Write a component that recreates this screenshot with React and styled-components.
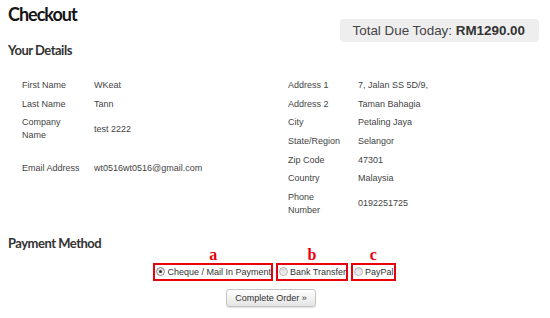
import React, { useState } from "react";
import styled, { createGlobalStyle } from "styled-components";

const GlobalStyle = createGlobalStyle`
  body {
    margin: 0;
    background: #fff;
    font-family: "Liberation Sans", Arial, sans-serif;
    color: #333;
  }
`;

const personal = [
  { label: "First Name", value: "WKeat" },
  { label: "Last Name", value: "Tann" },
  { label: "Company Name", value: "test 2222" },
  { spacer: true },
  { label: "Email Address", value: "wt0516wt0516@gmail.com" },
];

const address = [
  { label: "Address 1", value: "7, Jalan SS 5D/9," },
  { label: "Address 2", value: "Taman Bahagia" },
  { label: "City", value: "Petaling Jaya" },
  { label: "State/Region", value: "Selangor" },
  { label: "Zip Code", value: "47301" },
  { label: "Country", value: "Malaysia" },
  { label: "Phone Number", value: "0192251725" },
];

const methods = [
  { key: "a", label: "Cheque / Mail In Payment" },
  { key: "b", label: "Bank Transfer" },
  { key: "c", label: "PayPal" },
];

function DetailTable({ rows, labelWidth }) {
  return (
    <Table>
      {rows.map((row, i) =>
        row.spacer ? (
          <Spacer key={i} />
        ) : (
          <Row key={i} $labelWidth={labelWidth}>
            <Label>{row.label}</Label>
            <Value>{row.value}</Value>
          </Row>
        )
      )}
    </Table>
  );
}

export default function App() {
  const [method, setMethod] = useState("a");
  return (
    <Page>
      <GlobalStyle />
      <Header>
        <Title>Checkout</Title>
        <TotalDue>
          Total Due Today: <b>RM1290.00</b>
        </TotalDue>
      </Header>

      <SubTitle>Your Details</SubTitle>
      <Details>
        <DetailTable rows={personal} labelWidth={72} />
        <DetailTable rows={address} labelWidth={70} />
      </Details>

      <PaymentTitle>Payment Method</PaymentTitle>
      <Options>
        {methods.map((m) => (
          <Option key={m.key}>
            <Marker>{m.key}</Marker>
            <OptionBox onClick={() => setMethod(m.key)}>
              <Radio $checked={method === m.key} />
              {m.label}
            </OptionBox>
          </Option>
        ))}
      </Options>
      <Actions>
        <CompleteButton type="button">Complete Order &raquo;</CompleteButton>
      </Actions>
    </Page>
  );
}

const Page = styled.div`
  width: 550px;
  height: 318px;
  box-sizing: border-box;
  padding: 0 11px 0 8px;
  overflow: hidden;
`;

const Header = styled.div`
  display: flex;
  justify-content: space-between;
  align-items: flex-start;
  height: 42px;
`;

const Title = styled.h1`
  margin: 3px 0 0;
  font-family: Lato, "Open Sans", sans-serif;
  font-weight: 700;
  font-size: 18px;
  line-height: 22px;
  letter-spacing: -1px;
  color: #151515;
`;

const TotalDue = styled.div`
  margin-top: 19px;
  height: 23px;
  box-sizing: border-box;
  padding: 0 14px 0 13px;
  display: flex;
  align-items: center;
  background: #eeeeee;
  border-radius: 4px;
  font-size: 13.4px;
  color: #444;
  white-space: pre;

  b {
    color: #333;
  }
`;

const SubTitle = styled.h2`
  margin: 0;
  font-family: Lato, "Open Sans", sans-serif;
  font-weight: 700;
  font-size: 13px;
  line-height: 16px;
  letter-spacing: -0.5px;
  color: #333;
`;

const Details = styled.div`
  display: grid;
  grid-template-columns: 266px 1fr;
  padding-left: 14px;
  margin-top: 18px;
`;

const Table = styled.div`
  display: flex;
  flex-direction: column;
`;

const Row = styled.div`
  display: grid;
  grid-template-columns: ${(p) => p.$labelWidth}px 1fr;
  align-items: center;
  padding: 2.85px 0;
  font-size: 9px;
  line-height: 13px;
`;

const Spacer = styled.div`
  height: 14.5px;
`;

const Label = styled.div`
  padding-right: 12px;
  color: #444;
`;

const Value = styled.div`
  color: #444;
`;

const PaymentTitle = styled(SubTitle)`
  margin-top: 17px;
  line-height: 12px;
`;

const Options = styled.div`
  display: flex;
  justify-content: center;
  gap: 3px;
  padding-left: 2px;
`;

const Option = styled.div`
  display: flex;
  flex-direction: column;
  align-items: center;
`;

const Marker = styled.span`
  font-family: "Liberation Serif", "Times New Roman", serif;
  font-weight: 700;
  font-size: 16px;
  line-height: 12px;
  color: #e8000b;
  margin-bottom: 2px;
`;

const OptionBox = styled.label`
  display: inline-flex;
  align-items: center;
  gap: 2px;
  height: 18px;
  box-sizing: border-box;
  padding: 0 0 0 1px;
  border: 2px solid #e8000b;
  font-size: 9px;
  line-height: 14px;
  color: #333;
  white-space: nowrap;
  cursor: pointer;
`;

const Radio = styled.span`
  position: relative;
  width: 9px;
  height: 9px;
  box-sizing: border-box;
  border-radius: 50%;
  border: 1px solid ${(p) => (p.$checked ? "#8a8a8a" : "#b5b5b5")};
  background: linear-gradient(#d9d9d9, #f4f4f4);
  flex-shrink: 0;

  &::after {
    content: "";
    display: ${(p) => (p.$checked ? "block" : "none")};
    position: absolute;
    left: 2px;
    top: 2px;
    width: 3px;
    height: 3px;
    border-radius: 50%;
    background: #333;
  }
`;

const Actions = styled.div`
  display: flex;
  justify-content: center;
  margin-top: 8px;
  padding-right: 5px;
`;

const CompleteButton = styled.button`
  height: 18px;
  padding: 0 8px;
  font-family: "Liberation Sans", Arial, sans-serif;
  font-size: 9px;
  color: #333;
  background: linear-gradient(#ffffff, #e4e4e4);
  border: 1px solid #c4c4c4;
  border-radius: 3px;
  box-shadow: 0 1px 1px rgba(0, 0, 0, 0.12);
  cursor: pointer;
`;
